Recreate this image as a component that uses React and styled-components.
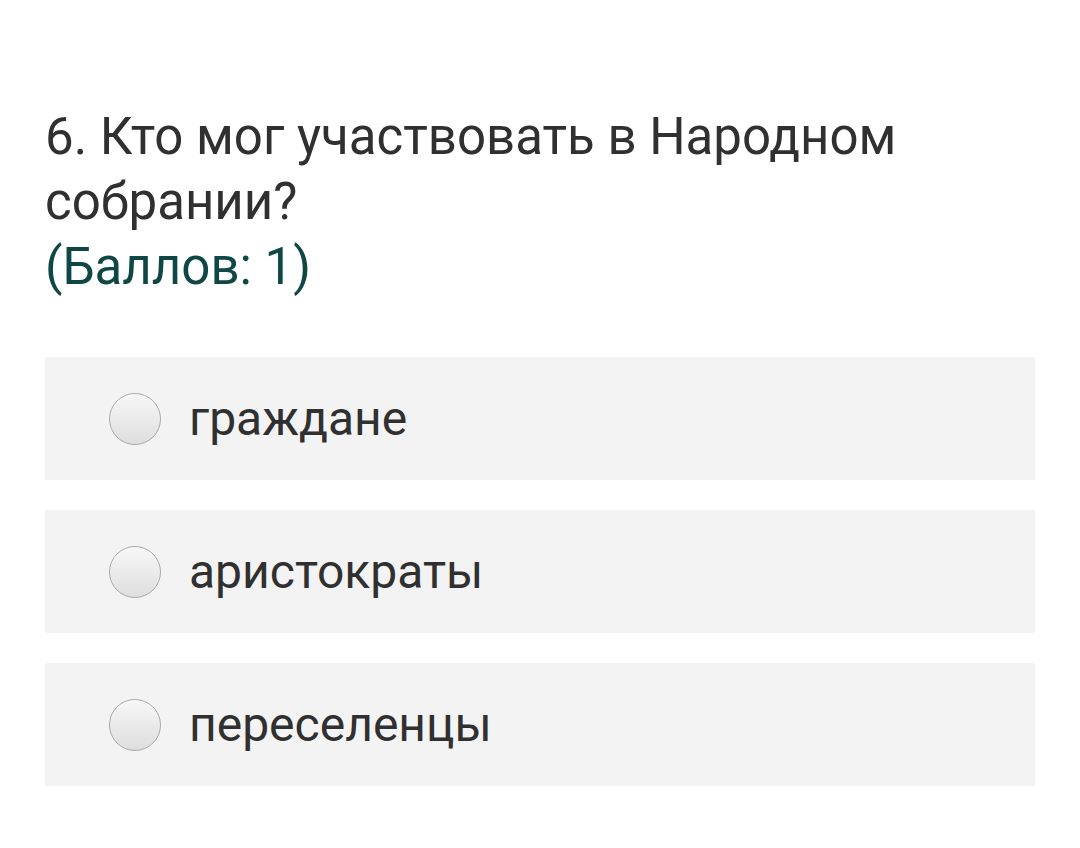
import React from "react";
import styled, { createGlobalStyle } from "styled-components";

const Global = createGlobalStyle`
  html, body { margin: 0; padding: 0; background: #ffffff; }
  body { font-family: Roboto, "Noto Sans", sans-serif; }
`;

const Page = styled.div`
  padding: 104px 45px 40px 45px;
  background: #ffffff;
`;

const Question = styled.h2`
  margin: 0;
  font-weight: 400;
  font-size: 51px;
  line-height: 65px;
  color: #303030;
  letter-spacing: 0;
`;

const Points = styled.span`
  display: block;
  color: #0e4744;
`;

const Options = styled.div`
  margin-top: 58px;
  display: flex;
  flex-direction: column;
  gap: 30px;
`;

const Option = styled.label`
  display: flex;
  align-items: center;
  height: 123px;
  padding-left: 64px;
  background: #f3f3f3;
  gap: 28px;
  cursor: pointer;
`;

const Radio = styled.span`
  width: 50px;
  height: 50px;
  border-radius: 50%;
  border: 1px solid #a9a9a9;
  background: linear-gradient(#f7f7f7, #dedede);
  box-shadow: inset 0 1px 1px rgba(255, 255, 255, 0.8);
  flex: none;
`;

const OptionText = styled.span`
  font-size: 48px;
  color: #303030;
  line-height: 1;
`;

const options = ["граждане", "аристократы", "переселенцы"];

export default function App() {
  return (
    <Page>
      <Global />
      <Question>
        6. Кто мог участвовать в Народном собрании?
        <Points>(Баллов: 1)</Points>
      </Question>
      <Options>
        {options.map((o) => (
          <Option key={o}>
            <Radio />
            <OptionText>{o}</OptionText>
          </Option>
        ))}
      </Options>
    </Page>
  );
}
